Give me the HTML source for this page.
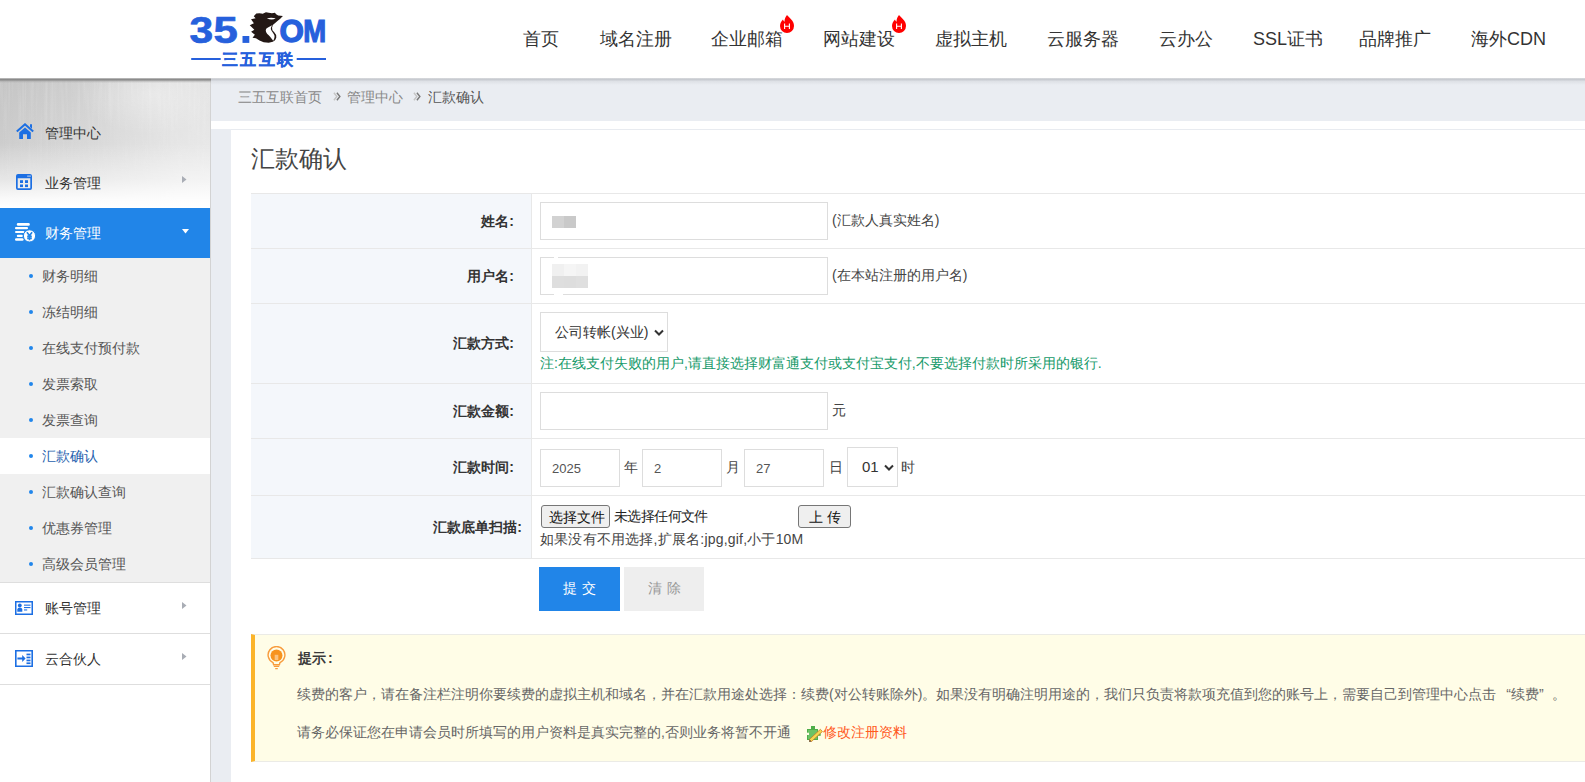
<!DOCTYPE html>
<html><head><meta charset="utf-8">
<style>
*{margin:0;padding:0;box-sizing:border-box}
html,body{width:1585px;height:782px;overflow:hidden;background:#fff;font-family:"Liberation Sans",sans-serif;color:#333}
.abs{position:absolute}
#header{position:absolute;left:0;top:0;width:1585px;height:79px;background:#fff;z-index:5}
#hshadow{position:absolute;left:211px;top:78px;width:1374px;height:7px;background:linear-gradient(rgba(185,188,194,.55),rgba(196,199,205,.9) 22%,rgba(215,218,223,.6) 50%,rgba(234,237,242,0));z-index:6}
#sshadow{position:absolute;left:0;top:78px;width:211px;height:5px;background:linear-gradient(rgba(150,150,150,.55),#858585 35%,rgba(160,160,160,.5) 65%,rgba(190,190,190,0));z-index:6}
.nav{position:absolute;top:27px;font-size:18px;line-height:24px;color:#333;white-space:nowrap}
.badge{position:absolute;top:15px;width:14px;height:18px}
#sidebar{position:absolute;left:0;top:79px;width:211px;height:703px;background:#fff;border-right:1px solid #d3d3d3}
#sbtex{position:absolute;left:0;top:0;width:210px;height:129px;
 background:
 linear-gradient(180deg,rgba(255,255,255,0) 0%,rgba(255,255,255,0) 50%,rgba(255,255,255,.45) 78%,rgba(255,255,255,.88) 93%,#fff 100%),
 radial-gradient(ellipse 70px 40px at 72% 12%,rgba(255,255,255,.35),rgba(255,255,255,0)),
 linear-gradient(90deg,rgba(0,0,0,.04) 0%,rgba(0,0,0,0) 30%,rgba(255,255,255,.4) 85%,rgba(255,255,255,.45) 100%),
 linear-gradient(180deg,#cccccc 0%,#d4d4d4 45%,#dedede 100%);}
.mi{position:absolute;left:0;width:210px;height:50px;font-size:14px;line-height:50px}
.mi .t{position:absolute;left:45px;top:0}
.sub{position:absolute;left:0;width:210px;height:36px;font-size:14px;line-height:36px;color:#555}
.sub .dot{position:absolute;left:29px;top:16px;width:4px;height:4px;border-radius:50%;background:#2186eb}
.sub .t{position:absolute;left:42px;top:0}
#crumb{position:absolute;left:211px;top:79px;width:1374px;height:42px;background:#eaedf2;font-size:14px;color:#888}
#gutter{position:absolute;left:211px;top:129px;width:20px;height:653px;background:#eaedf2}
#panel{position:absolute;left:231px;top:129px;width:1354px;height:653px;background:#fff;border-top:1px solid #e8ebf0}
.row{position:absolute;left:251px;width:1334px;border-bottom:1px solid #e8e8e8}
.lab{position:absolute;left:0;top:0;width:281px;height:100%;background:#f4f7fb;border-right:1px solid #e8e8e8}
.lab span{position:absolute;right:17px;font-size:14px;font-weight:bold;color:#333;white-space:nowrap}
.inp{position:absolute;border:1px solid #ddd;background:#fff}
.txt{position:absolute;font-size:14px;color:#444;white-space:nowrap}
</style></head><body>
<div id="header">
  <!-- logo -->
  <svg class="abs" style="left:0;top:0" width="340" height="79" viewBox="0 0 340 79">
    <g fill="#2660dc" font-family="Liberation Sans" font-weight="bold">
      <text x="0" y="0" font-size="37" stroke="#2660dc" stroke-width="0.7" transform="translate(189.6,43.2) scale(1.15,1)">3</text>
      <text x="0" y="0" font-size="37" stroke="#2660dc" stroke-width="0.7" transform="translate(213.6,43.2) scale(1.18,1)">5</text>
      <rect x="242.5" y="36" width="6.8" height="6.9"/>
      <text x="0" y="0" font-size="32" stroke="#2660dc" stroke-width="1.3" transform="translate(279.6,42.4) scale(0.98,1)">O</text>
      <text x="0" y="0" font-size="32" stroke="#2660dc" stroke-width="1.2" transform="translate(303.2,42.4) scale(0.86,1)">M</text>
      <rect x="191.2" y="58" width="29.5" height="2"/>
      <rect x="296.7" y="58" width="29.3" height="2"/>
    </g>
    <svg x="248" y="10" width="36" height="36" viewBox="0 0 782 782">
      <path fill="#231815" d="M180 75 L250 68 L320 80 L390 50 L450 58 L520 72 L585 60 L612 95 L655 118 L758 128 L700 190 L640 240 L590 282 L545 320 L522 380 L530 440 L575 490 L612 545 L614 605 L588 655 L540 692 L450 712 L340 702 L250 662 L172 615 L98 604 L150 540 L68 472 L138 430 L38 332 L128 290 L66 200 L165 178 L125 135 Z"/>
      <path fill="#fff" d="M548 318 C490 345 430 380 395 405 C370 450 395 500 450 550 C495 595 520 635 548 668 C568 635 580 600 576 560 C566 515 520 478 500 430 C488 385 505 345 548 318 Z"/>
      <path fill="#fff" d="M410 178 Q500 158 602 178 Q520 232 410 178 Z"/>
    </svg>
  </svg>
  <div class="abs" style="left:222px;top:50px;font-size:16px;font-weight:bold;color:#2660dc;line-height:20px;letter-spacing:2.4px;white-space:nowrap;-webkit-text-stroke:0.3px #2660dc">三五互联</div>
  <div class="nav" style="left:523px">首页</div>
  <div class="nav" style="left:600px">域名注册</div>
  <div class="nav" style="left:711px">企业邮箱</div>
  <div class="nav" style="left:823px">网站建设</div>
  <div class="nav" style="left:935px">虚拟主机</div>
  <div class="nav" style="left:1047px">云服务器</div>
  <div class="nav" style="left:1159px">云办公</div>
  <div class="nav" style="left:1253px">SSL证书</div>
  <div class="nav" style="left:1359px">品牌推广</div>
  <div class="nav" style="left:1471px">海外CDN</div>
  <svg class="badge" style="left:780px" viewBox="0 0 14 18"><path fill="#f00" d="M7 0 C9 2.5 14 5.5 14 11 A7 7 0 0 1 0 11 C0 8 1.5 6 3 4.5 C3.5 6 4 6.5 4.5 6.8 C4.5 4 5.5 2 7 0 Z"/><path fill="none" stroke="#fff" stroke-width="1.1" d="M4.6 8.5 V14 M9.4 8.5 V14 M4.6 11.2 H9.4"/></svg>
  <svg class="badge" style="left:892px" viewBox="0 0 14 18"><path fill="#f00" d="M7 0 C9 2.5 14 5.5 14 11 A7 7 0 0 1 0 11 C0 8 1.5 6 3 4.5 C3.5 6 4 6.5 4.5 6.8 C4.5 4 5.5 2 7 0 Z"/><path fill="none" stroke="#fff" stroke-width="1.1" d="M4.6 8.5 V14 M9.4 8.5 V14 M4.6 11.2 H9.4"/></svg>
</div>
<div id="hshadow"></div><div id="sshadow"></div>

<div id="sidebar">
  <div id="sbtex"></div>
  <svg class="abs" style="left:0;top:0;opacity:.38" width="210" height="110" viewBox="0 0 210 110">
    <defs>
      <filter id="tx" x="0" y="0" width="100%" height="100%"><feTurbulence type="fractalNoise" baseFrequency="0.35 0.015" numOctaves="2" seed="7"/><feColorMatrix type="matrix" values="0 0 0 0 1  0 0 0 0 1  0 0 0 0 1  1.2 0 0 0 -0.55"/></filter>
      <linearGradient id="txm" x1="0" y1="0" x2="0" y2="1"><stop offset="0" stop-color="#fff"/><stop offset="1" stop-color="#000"/></linearGradient>
      <mask id="txk"><rect width="210" height="110" fill="url(#txm)"/></mask>
    </defs>
    <rect width="210" height="110" filter="url(#tx)" mask="url(#txk)"/>
  </svg>
  <div class="mi" style="top:29px;color:#333">
    <svg class="abs" style="left:16px;top:15px" width="18" height="16" viewBox="0 0 18 16"><path fill="none" stroke="#1c6fe3" stroke-width="2" stroke-linejoin="miter" d="M0.8 8.6 L9 1.3 L17.2 8.6"/><path fill="#1c6fe3" d="M14 1.2 H16 V5.8 L14 4 Z M3.2 9.6 L9 4.5 L14.8 9.6 V16 H11 V11.2 H7 V16 H3.2 Z"/></svg>
    <span class="t">管理中心</span>
  </div>
  <div class="mi" style="top:79px;color:#333">
    <svg class="abs" style="left:16px;top:16px" width="16" height="16" viewBox="0 0 16 16"><path fill="#1c6fe3" fill-rule="evenodd" d="M2 0 H14 A2 2 0 0 1 16 2 V14 A2 2 0 0 1 14 16 H2 A2 2 0 0 1 0 14 V2 A2 2 0 0 1 2 0 Z M1.7 4.2 V14.3 H14.3 V4.2 Z M11.4 1.4 h1.3 v1.3 h-1.3 Z M13.3 1.4 h1.3 v1.3 h-1.3 Z"/><g fill="#1c6fe3"><rect x="4" y="6.2" width="3" height="2.8"/><rect x="9" y="6.2" width="3" height="2.8"/><rect x="4" y="10.5" width="3" height="2.6"/><rect x="9" y="10.5" width="3" height="2.6"/></g></svg>
    <span class="t">业务管理</span>
    <svg class="abs" style="left:182px;top:18px" width="5" height="7" viewBox="0 0 5 7"><path fill="#a9adb5" d="M0 0 L4.5 3.5 L0 7 Z"/></svg>
  </div>
  <div class="mi" style="top:129px;background:#2185e8;color:#fff">
    <svg class="abs" style="left:15px;top:15px" width="22" height="20" viewBox="0 0 22 20"><g fill="#fff"><rect x="1.8" y="0" width="13" height="2.7" rx="1.3"/><rect x="0" y="4.1" width="13" height="2.1" rx="1"/><rect x="0" y="8.1" width="9.3" height="2" rx="1"/><rect x="1.8" y="11.8" width="6" height="2.2" rx="1"/><rect x="0" y="15.2" width="8.6" height="2.5" rx="1.2"/></g><circle cx="14.5" cy="12.9" r="6.1" fill="#fff" stroke="#2185e8" stroke-width="1"/><path fill="none" stroke="#2185e8" stroke-width="1.6" d="M11.9 9.2 L14.5 12.6 L17.1 9.2 M14.5 12.6 V17.2 M12.2 13.4 H16.8 M12.2 15.4 H16.8"/></svg>
    <span class="t">财务管理</span>
    <svg class="abs" style="left:182px;top:21px" width="7" height="5" viewBox="0 0 7 5"><path fill="#fff" d="M0 0 H7 L3.5 4.5 Z"/></svg>
  </div>
  <div class="abs" style="left:0;top:179px;width:210px;height:325px;background:#f0f0f0;border-bottom:1px solid #dedede"></div>
  <div class="sub" style="top:179px"><i class="dot"></i><span class="t">财务明细</span></div>
  <div class="sub" style="top:215px"><i class="dot"></i><span class="t">冻结明细</span></div>
  <div class="sub" style="top:251px"><i class="dot"></i><span class="t">在线支付预付款</span></div>
  <div class="sub" style="top:287px"><i class="dot"></i><span class="t">发票索取</span></div>
  <div class="sub" style="top:323px"><i class="dot"></i><span class="t">发票查询</span></div>
  <div class="sub" style="top:359px;background:#fff;color:#1f5fae"><i class="dot"></i><span class="t">汇款确认</span></div>
  <div class="sub" style="top:395px"><i class="dot"></i><span class="t">汇款确认查询</span></div>
  <div class="sub" style="top:431px"><i class="dot"></i><span class="t">优惠券管理</span></div>
  <div class="sub" style="top:467px"><i class="dot"></i><span class="t">高级会员管理</span></div>
  <div class="mi" style="top:504px;color:#333;border-bottom:1px solid #dedede;height:51px">
    <svg class="abs" style="left:15px;top:18px" width="18" height="14" viewBox="0 0 18 14"><path fill="#1c6fe3" fill-rule="evenodd" d="M0 0 H18 V14 H0 Z M1.5 1.5 V12.5 H16.5 V1.5 Z"/><circle fill="#1c6fe3" cx="4.8" cy="4.4" r="1.9"/><path fill="#1c6fe3" d="M2.3 10.8 V8.6 Q2.5 6.6 4.8 6.6 Q7.1 6.6 7.3 8.6 V10.8 Z"/><rect fill="#1c6fe3" x="9" y="3.6" width="6.5" height="1.1"/><rect fill="#1c6fe3" x="9" y="6" width="6.5" height="1.1"/><rect fill="#1c6fe3" x="9" y="8.4" width="3.2" height="1.1"/></svg>
    <span class="t">账号管理</span>
    <svg class="abs" style="left:182px;top:19px" width="5" height="7" viewBox="0 0 5 7"><path fill="#a9adb5" d="M0 0 L4.5 3.5 L0 7 Z"/></svg>
  </div>
  <div class="mi" style="top:555px;color:#333;border-bottom:1px solid #dedede;height:51px">
    <svg class="abs" style="left:15px;top:16px" width="18" height="17" viewBox="0 0 18 17"><path fill="#1c6fe3" fill-rule="evenodd" d="M0 0 H18 V17 H0 Z M1.6 1.6 V15.4 H16.4 V1.6 Z"/><path fill="#1c6fe3" d="M2.4 7.4 H7.2 V5 L10.6 8.5 L7.2 12 V9.6 H2.4 Z"/><rect fill="#1c6fe3" x="11.5" y="3.6" width="4" height="1.7"/><rect fill="#1c6fe3" x="11.5" y="6.6" width="4" height="1.7"/><rect fill="#1c6fe3" x="11.5" y="9.6" width="4" height="1.7"/><rect fill="#1c6fe3" x="11.5" y="12.4" width="4" height="1.7"/></svg>
    <span class="t">云合伙人</span>
    <svg class="abs" style="left:182px;top:19px" width="5" height="7" viewBox="0 0 5 7"><path fill="#a9adb5" d="M0 0 L4.5 3.5 L0 7 Z"/></svg>
  </div>
</div>
</div>

<div id="crumb">
  <span class="abs" style="left:27px;top:8px;line-height:20px">三五互联首页</span>
  <svg class="abs" style="left:122px;top:13px" width="8" height="9" viewBox="0 0 8 9"><path fill="none" stroke="#c4c4c4" stroke-width="1.4" d="M0.9 0.7 L3.9 4.5 L0.9 8.3"/><path fill="none" stroke="#7a7a7a" stroke-width="1.4" d="M3.9 0.7 L6.9 4.5 L3.9 8.3"/></svg>
  <span class="abs" style="left:136px;top:8px;line-height:20px">管理中心</span>
  <svg class="abs" style="left:202px;top:13px" width="8" height="9" viewBox="0 0 8 9"><path fill="none" stroke="#c4c4c4" stroke-width="1.4" d="M0.9 0.7 L3.9 4.5 L0.9 8.3"/><path fill="none" stroke="#7a7a7a" stroke-width="1.4" d="M3.9 0.7 L6.9 4.5 L3.9 8.3"/></svg>
  <span class="abs" style="left:217px;top:8px;line-height:20px;color:#555">汇款确认</span>
</div>
<div id="gutter"></div>
<div id="panel">
  <div class="abs" style="left:20px;top:13px;font-size:24px;line-height:32px;color:#444;white-space:nowrap">汇款确认</div>
</div>
<div class="abs" style="left:251px;top:193px;width:1334px;height:366px;border-top:1px solid #e8e8e8;border-left:1px solid #e8e8e8"></div>
<div class="row" style="top:194px;height:55px"><div class="lab"><span style="top:18px;line-height:18px">姓名:</span></div></div>
<div class="row" style="top:249px;height:55px"><div class="lab"><span style="top:18px;line-height:18px">用户名:</span></div></div>
<div class="row" style="top:304px;height:80px"><div class="lab"><span style="top:30px;line-height:18px">汇款方式:</span></div></div>
<div class="row" style="top:384px;height:55px"><div class="lab"><span style="top:18px;line-height:18px">汇款金额:</span></div></div>
<div class="row" style="top:439px;height:57px"><div class="lab"><span style="top:19px;line-height:18px">汇款时间:</span></div></div>
<div class="row" style="top:496px;height:63px"><div class="lab"><span style="top:22px;line-height:18px;right:9px">汇款底单扫描:</span></div></div>

<!-- row1 -->
<div class="inp" style="left:540px;top:202px;width:288px;height:38px">
  <div class="abs" style="left:11px;top:13px;width:12px;height:12px;background:#d2d2d2"></div>
  <div class="abs" style="left:23px;top:13px;width:12px;height:12px;background:#c9c9c9"></div>
</div>
<div class="txt" style="left:832px;top:211px;line-height:18px">(汇款人真实姓名)</div>
<!-- row2 -->
<div class="inp" style="left:540px;top:257px;width:288px;height:38px">
  <div class="abs" style="left:13px;top:-1px;width:4px;height:2px;background:#fff"></div>
  <div class="abs" style="left:13px;top:36px;width:9px;height:2px;background:#fff"></div>
  <div class="abs" style="left:11px;top:6px;width:12px;height:12px;background:#f0f0f0"></div>
  <div class="abs" style="left:23px;top:6px;width:12px;height:12px;background:#f5f5f5"></div>
  <div class="abs" style="left:35px;top:6px;width:12px;height:12px;background:#f2f2f2"></div>
  <div class="abs" style="left:11px;top:18px;width:12px;height:12px;background:#dedede"></div>
  <div class="abs" style="left:23px;top:18px;width:12px;height:12px;background:#dddddd"></div>
  <div class="abs" style="left:35px;top:18px;width:12px;height:12px;background:#dfdfdf"></div>
</div>
<div class="txt" style="left:832px;top:266px;line-height:18px">(在本站注册的用户名)</div>
<!-- row3 -->
<div class="inp" style="left:540px;top:312px;width:128px;height:40px">
  <span class="abs" style="left:14px;top:10px;font-size:14px;line-height:18px;color:#333;white-space:nowrap">公司转帐(兴业)</span>
  <svg class="abs" style="left:113px;top:16px" width="10" height="8" viewBox="0 0 10 8"><path fill="none" stroke="#333" stroke-width="2" d="M1 1.5 L5 5.5 L9 1.5"/></svg>
</div>
<div class="txt" style="left:540px;top:354px;line-height:18px;color:#169a6a">注:在线支付失败的用户,请直接选择财富通支付或支付宝支付,不要选择付款时所采用的银行.</div>
<!-- row4 -->
<div class="inp" style="left:540px;top:392px;width:288px;height:38px"></div>
<div class="txt" style="left:832px;top:401px;line-height:18px">元</div>
<!-- row5 -->
<div class="inp" style="left:540px;top:449px;width:80px;height:38px"><span class="abs" style="left:11px;top:10px;font-size:13px;line-height:18px;color:#555">2025</span></div>
<div class="txt" style="left:624px;top:458px;line-height:18px">年</div>
<div class="inp" style="left:642px;top:449px;width:80px;height:38px"><span class="abs" style="left:11px;top:10px;font-size:13px;line-height:18px;color:#555">2</span></div>
<div class="txt" style="left:726px;top:458px;line-height:18px">月</div>
<div class="inp" style="left:744px;top:449px;width:80px;height:38px"><span class="abs" style="left:11px;top:10px;font-size:13px;line-height:18px;color:#555">27</span></div>
<div class="txt" style="left:829px;top:458px;line-height:18px">日</div>
<div class="inp" style="left:847px;top:447px;width:51px;height:40px">
  <span class="abs" style="left:14px;top:10px;font-size:15px;line-height:18px;color:#333">01</span>
  <svg class="abs" style="left:36px;top:16px" width="10" height="8" viewBox="0 0 10 8"><path fill="none" stroke="#333" stroke-width="2" d="M1 1.5 L5 5.5 L9 1.5"/></svg>
</div>
<div class="txt" style="left:901px;top:458px;line-height:18px">时</div>
<!-- row6 -->
<div class="abs" style="left:541px;top:505px;width:69px;height:23px;background:#efefef;border:1px solid #767676;border-radius:3px"><span class="abs" style="left:7px;top:2px;font-size:14px;line-height:18px;color:#111;white-space:nowrap">选择文件</span></div>
<div class="txt" style="left:614px;top:507px;line-height:18px;color:#222;letter-spacing:-0.6px">未选择任何文件</div>
<div class="abs" style="left:798px;top:505px;width:53px;height:23px;background:#efefef;border:1px solid #767676;border-radius:3px"><span class="abs" style="left:10px;top:2px;font-size:14px;line-height:18px;color:#111;white-space:nowrap;letter-spacing:4px">上传</span></div>
<div class="txt" style="left:540px;top:530px;line-height:18px;letter-spacing:0.2px">如果没有不用选择,扩展名:jpg,gif,小于10M</div>
<!-- buttons -->
<div class="abs" style="left:539px;top:567px;width:81px;height:44px;background:#2185e8"><span class="abs" style="left:24px;top:12px;font-size:14px;line-height:18px;color:#fff;letter-spacing:5px;white-space:nowrap">提交</span></div>
<div class="abs" style="left:624px;top:567px;width:80px;height:44px;background:#eeeeee"><span class="abs" style="left:24px;top:12px;font-size:14px;line-height:18px;color:#999;letter-spacing:5px;white-space:nowrap">清除</span></div>
<!-- tip -->
<div class="abs" style="left:251px;top:634px;width:1334px;height:128px;background:#fffde7;border-top:1px solid #ebebe6;border-bottom:1px solid #ebebe6;border-left:4px solid #fbb42a">
  <svg class="abs" style="left:12px;top:11px" width="20" height="24" viewBox="0 0 20 24">
    <path fill="none" stroke="#f89b3c" stroke-width="1.4" d="M6 16.6 A8.4 8.4 0 1 1 13 16.6 L12.4 18.8 H6.6 Z"/>
    <circle cx="9.5" cy="9.4" r="6" fill="#f7931e"/>
    <rect x="7.7" y="8.8" width="3.6" height="5.2" fill="#fbc27e"/>
    <path fill="none" stroke="#f89b3c" stroke-width="1.3" d="M6.8 20.4 H12.2 M8.2 22.6 H10.8"/>
  </svg>
  <span class="abs" style="left:43px;top:14px;font-size:14px;line-height:18px;font-weight:bold;color:#3a3a3a">提示<span style="margin-left:2px">:</span></span>
  <span class="abs" style="left:42px;top:50px;font-size:14px;line-height:18px;color:#666;white-space:nowrap">续费的客户，请在备注栏注明你要续费的虚拟主机和域名，并在汇款用途处选择：续费(对公转账除外)。如果没有明确注明用途的，我们只负责将款项充值到您的账号上，需要自己到管理中心点击<span style="margin-left:10px">“</span>续费<span style="margin-right:8px">”</span>。</span>
  <span class="abs" style="left:42px;top:88px;font-size:14px;line-height:18px;color:#666;white-space:nowrap">请务必保证您在申请会员时所填写的用户资料是真实完整的,否则业务将暂不开通</span>
  <svg class="abs" style="left:551px;top:90px" width="17" height="17" viewBox="0 0 17 17">
    <g fill="#4fae4a"><rect x="1" y="4" width="11" height="11"/><rect x="5" y="1" width="4" height="3.2"/><rect x="12" y="8.3" width="2.7" height="2.5"/></g>
    <rect x="2" y="5" width="9" height="9" fill="#6cc265"/>
    <rect x="1" y="7.7" width="2" height="2.3" fill="#fffde7"/>
    <path fill="#f5d84e" stroke="#c97a2c" stroke-width="0.8" d="M3.4 14.4 L14.4 4.3 L16.4 6.5 L5.4 16.6 Z"/>
    <path fill="#5a3510" d="M3.4 14.4 L5.4 16.6 L3.2 17 Z"/>
  </svg>
  <span class="abs" style="left:568px;top:88px;font-size:14px;line-height:18px;color:#ff5a1f;white-space:nowrap">修改注册资料</span>
</div>


</body></html>
